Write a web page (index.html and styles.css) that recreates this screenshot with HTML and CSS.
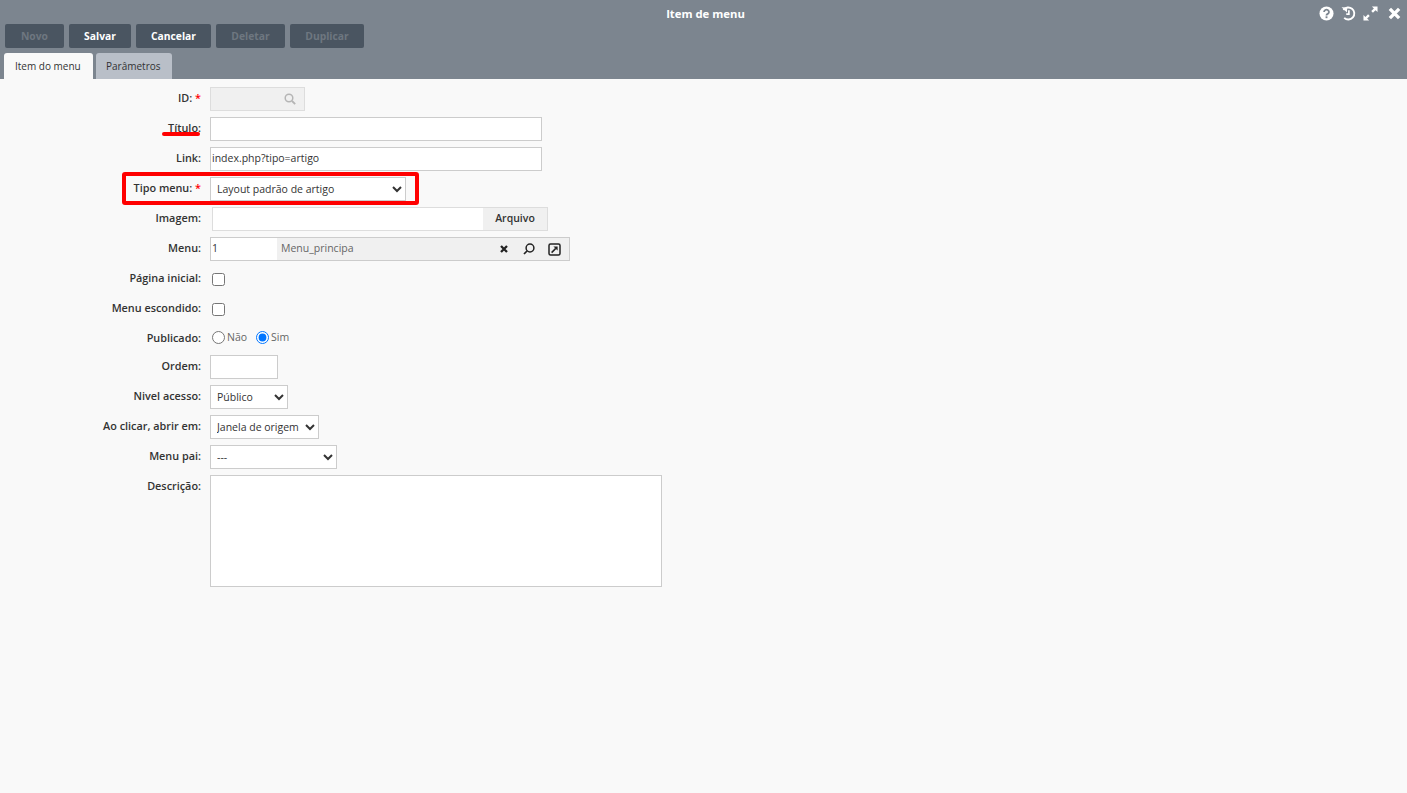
FILE: index.html
```html
<!DOCTYPE html>
<html lang="pt">
<head>
  <meta charset="UTF-8" />
  <title>Item de menu</title>
  <link rel="stylesheet" href="styles.css">
</head>
<body>
  <div class="header">
    <div class="title-bar">
      <span class="title">Item de menu</span>
      <div class="window-icons">
        <svg width="15" height="15" viewBox="0 0 16 16"><circle cx="8" cy="8" r="7.5" fill="#fff"/><path d="M5.4 6.3a2.6 2.4 0 1 1 3.9 2.1c-.9.5-1.3.9-1.3 1.6" fill="none" stroke="#7c858f" stroke-width="2"/><rect x="7" y="11" width="2" height="2" fill="#7c858f"/></svg>
        <svg width="15" height="15" viewBox="0 0 16 16"><path d="M2.6 4.2A6.4 6.4 0 1 1 3.4 12.6" fill="none" stroke="#fff" stroke-width="2"/><path d="M0.6 1.4l6 .2-.2 5.4z" fill="#fff"/><path d="M8.4 4.6v4H5.6" fill="none" stroke="#fff" stroke-width="1.8"/></svg>
        <svg width="15" height="15" viewBox="0 0 16 16"><path d="M9.5 0.5h6v6l-2.1-2.1-2.8 2.8-1.8-1.8 2.8-2.8zM6.5 15.5h-6v-6l2.1 2.1 2.8-2.8 1.8 1.8-2.8 2.8z" fill="#fff"/></svg>
        <svg class="close-icon" width="13" height="13" viewBox="0 0 14 14"><path d="M2 2l10 10M12 2L2 12" stroke="#fff" stroke-width="3.6"/></svg>
      </div>
    </div>
    <div class="toolbar">
      <button class="tool-btn btn-novo disabled">Novo</button>
      <button class="tool-btn btn-salvar">Salvar</button>
      <button class="tool-btn btn-cancelar">Cancelar</button>
      <button class="tool-btn btn-deletar disabled">Deletar</button>
      <button class="tool-btn btn-duplicar disabled">Duplicar</button>
    </div>
    <div class="tabs">
      <div class="tab active">Item do menu</div>
      <div class="tab">Parâmetros</div>
    </div>
  </div>

  <form class="form">
    <div class="row">
      <label>ID: <span class="req">*</span></label>
      <div class="id-field">
        <svg width="12" height="12" viewBox="0 0 12 12"><circle cx="5" cy="5" r="3.8" fill="none" stroke="#b5b5b5" stroke-width="1.5"/><path d="M8 8l3.2 3.2" stroke="#b5b5b5" stroke-width="1.8"/></svg>
      </div>
    </div>
    <div class="row">
      <label>Título:</label>
      <input class="field w-332" type="text">
      <span class="mark-underline"></span>
    </div>
    <div class="row">
      <label>Link:</label>
      <input class="field w-332 link-input" type="text" value="index.php?tipo=artigo">
    </div>
    <div class="row">
      <label>Tipo menu: <span class="req">*</span></label>
      <select class="field select w-196"><option>Layout padrão de artigo</option></select>
      <span class="mark-box"></span>
    </div>
    <div class="row">
      <label>Imagem:</label>
      <div class="file-field">
        <span class="file-input"></span>
        <span class="file-btn">Arquivo</span>
      </div>
    </div>
    <div class="row">
      <label>Menu:</label>
      <div class="lookup">
        <span class="lookup-id">1</span>
        <span class="lookup-name">Menu_principa</span>
        <svg class="lookup-x" width="8" height="8" viewBox="0 0 8 8"><path d="M1 1l6 6M7 1L1 7" stroke="#222" stroke-width="2.3"/></svg>
        <svg class="lookup-s" width="12" height="12" viewBox="0 0 12 12"><circle cx="7" cy="5" r="3.9" fill="none" stroke="#222" stroke-width="1.5"/><path d="M4 8L1 11" stroke="#222" stroke-width="1.7"/></svg>
        <svg class="lookup-o" width="13" height="13" viewBox="0 0 13 13"><rect x="1" y="1" width="11" height="11" rx="1.5" fill="none" stroke="#222" stroke-width="1.5"/><path d="M3.6 9.6l4.2-4.2" stroke="#222" stroke-width="1.5"/><path d="M5.4 3.4h4.2v4.2z" fill="#222"/></svg>
      </div>
    </div>
    <div class="row">
      <label>Página inicial:</label>
      <input class="check" type="checkbox">
    </div>
    <div class="row">
      <label>Menu escondido:</label>
      <input class="check" type="checkbox">
    </div>
    <div class="row row-radio">
      <label>Publicado:</label>
      <div class="radios">
        <input type="radio" name="pub"><span class="radio-text">Não</span>
        <input type="radio" name="pub" checked><span class="radio-text">Sim</span>
      </div>
    </div>
    <div class="row">
      <label>Ordem:</label>
      <input class="field w-68" type="text">
    </div>
    <div class="row">
      <label>Nivel acesso:</label>
      <select class="field select w-78"><option>Público</option></select>
    </div>
    <div class="row">
      <label>Ao clicar, abrir em:</label>
      <select class="field select w-109"><option>Janela de origem</option></select>
    </div>
    <div class="row">
      <label>Menu pai:</label>
      <select class="field select w-127"><option>---</option></select>
    </div>
    <div class="row">
      <label>Descrição:</label>
      <textarea class="field desc"></textarea>
    </div>
  </form>
</body>
</html>
```

FILE: styles.css
```css
* {
  box-sizing: border-box;
}

body {
  margin: 0;
  background-color: #f9f9f9;
  color: #333;
  font-family: "Open Sans", sans-serif;
  font-size: 10.5px;
  min-height: 100vh;
}

.header {
  background-color: #7c858f;
  height: 79px;
  padding: 0 0 0 4px;
}

.title-bar {
  height: 24px;
  position: relative;
  text-align: center;
  padding-top: 6px;
}

.title {
  color: #fff;
  font-weight: 700;
  font-size: 11.3px;
  line-height: 15px;
  display: block;
}

.window-icons {
  position: absolute;
  top: 6px;
  right: 6px;
  display: flex;
  align-items: center;
  gap: 7px;
}

.close-icon {
  margin-left: 3px;
}

.toolbar {
  display: flex;
  gap: 5px;
  padding-left: 1px;
  height: 24px;
}

.tool-btn {
  height: 24px;
  padding: 0 0 1px;
  border: none;
  border-radius: 2px;
  background-color: #4a5561;
  color: #fff;
  font-family: inherit;
  font-size: 10.3px;
  font-weight: 700;
}

.tool-btn.disabled {
  color: #6e7780;
}

.btn-novo { width: 59px; }
.btn-salvar { width: 62px; }
.btn-cancelar { width: 75px; }
.btn-deletar { width: 69px; }
.btn-duplicar { width: 74px; }

.tabs {
  display: flex;
  gap: 3px;
  margin-top: 5px;
}

.tab {
  width: 76px;
  height: 26px;
  padding-left: 10px;
  line-height: 26px;
  font-size: 10px;
  border-radius: 3px 3px 0 0;
  background-color: #b9bfc8;
  color: #333;
}

.tab.active {
  width: 89px;
  padding-left: 11px;
  background-color: #f9f9f9;
}

.form {
  padding-top: 8px;
  display: flex;
  flex-direction: column;
  gap: 6px;
}

.row {
  display: flex;
  align-items: flex-start;
  gap: 9px;
  position: relative;
  min-height: 24px;
}

.row label {
  width: 201px;
  text-align: right;
  font-size: 10.85px;
  font-weight: 600;
  line-height: 22px;
  color: #333;
}

.req {
  color: #f00;
}

.field {
  height: 24px;
  border: 1px solid #ccc;
  background-color: #fff;
  font-family: inherit;
  font-size: 10.5px;
  color: #333;
  padding: 0 1px 2px;
  border-radius: 0;
  outline: none;
}

.select {
  padding: 0 2px;
}

.w-332 { width: 332px; }
.w-196 { width: 196px; }
.w-68 { width: 68px; }
.w-78 { width: 78px; }
.w-109 { width: 109px; }
.w-127 { width: 127px; }

.desc {
  width: 452px;
  height: 112px;
  resize: none;
}

.id-field {
  width: 95px;
  height: 24px;
  border: 1px solid #ddd;
  background-color: #f0f0f0;
  display: flex;
  align-items: center;
  justify-content: flex-end;
  padding-right: 8px;
}

.file-field {
  display: flex;
  width: 336px;
  height: 24px;
  margin-left: 2px;
  border: 1px solid #ddd;
  background-color: #fff;
}

.file-input {
  flex: 1;
}

.file-btn {
  width: 64px;
  background-color: #f0f0f0;
  font-weight: 600;
  text-align: center;
  line-height: 21px;
}

.lookup {
  display: flex;
  align-items: center;
  width: 360px;
  height: 24px;
  border: 1px solid #ccc;
  background-color: #f0f0f0;
}

.lookup-id {
  width: 66px;
  height: 22px;
  line-height: 21px;
  background-color: #fff;
  padding-left: 1px;
}

.lookup-name {
  width: 222px;
  line-height: 21px;
  height: 22px;
  padding-left: 4px;
  color: #666;
}

.lookup-x { margin-left: 1px; }
.lookup-s { margin-left: 15px; }
.lookup-o { margin-left: 13px; }

.check {
  width: 13px;
  height: 13px;
  margin: 6px 0 0 2px;
}

.row-radio {
  min-height: 22px;
}

.radios {
  display: flex;
  align-items: center;
  height: 20px;
  margin-left: 2px;
}

.radios input {
  margin: 0 2px 0 0;
}

.radio-text {
  margin-right: 9px;
  color: #666;
}

/* red marks drawn on top of the screenshot */
.mark-underline {
  position: absolute;
  left: 162px;
  top: 15px;
  width: 38px;
  height: 4px;
  border-radius: 2px;
  background-color: #f00;
}

.mark-box {
  position: absolute;
  left: 122px;
  top: -5px;
  width: 297px;
  height: 33px;
  border: 4px solid #f00;
  border-radius: 3px;
}
```
